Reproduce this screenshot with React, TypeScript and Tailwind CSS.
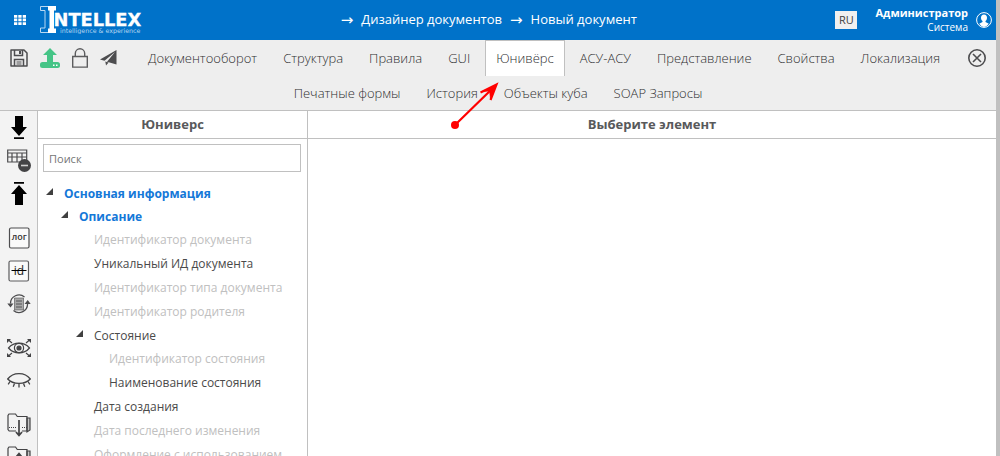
import React from 'react';
import clsx from 'clsx';

const primaryTabs = ['Документооборот', 'Структура', 'Правила', 'GUI', 'Юнивёрс', 'АСУ-АСУ', 'Представление', 'Свойства', 'Локализация'];
const secondaryTabs = ['Печатные формы', 'История', 'Объекты куба', 'SOAP Запросы'];

type TreeNode = {
  label: string;
  kind?: 'group' | 'muted';
  children?: TreeNode[];
};

const tree: TreeNode[] = [
  {
    label: 'Основная информация',
    kind: 'group',
    children: [
      {
        label: 'Описание',
        kind: 'group',
        children: [
          { label: 'Идентификатор документа', kind: 'muted' },
          { label: 'Уникальный ИД документа' },
          { label: 'Идентификатор типа документа', kind: 'muted' },
          { label: 'Идентификатор родителя', kind: 'muted' },
          {
            label: 'Состояние',
            children: [
              { label: 'Идентификатор состояния', kind: 'muted' },
              { label: 'Наименование состояния' },
            ],
          },
          { label: 'Дата создания' },
          { label: 'Дата последнего изменения', kind: 'muted' },
          { label: 'Оформление с использованием', kind: 'muted' },
        ],
      },
    ],
  },
];

function Logo() {
  return (
    <svg width="102" height="28" viewBox="0 0 102 28" role="img" aria-label="Intellex">
      <path d="M10 .5H.5V4.500H5v17.500H.5v4.500H10" fill="none" stroke="#b9d8f2" />
      <path d="M8 0h8v4.500h-2v18h2V27H8v-4.500h1.500v-18H8z" fill="#fff" />
      <text x="13.500" y="20" fill="#fff" stroke="#fff" strokeWidth=".3" fontFamily="DejaVu Sans, sans-serif" fontWeight="700" fontSize="17.800">NTELLEX</text>
      <text x="20" y="26.500" fill="#b5d5f0" fontFamily="DejaVu Sans, sans-serif" fontSize="6.300">intelligence &amp; experience</text>
    </svg>
  );
}

function SaveIcon() {
  return (
    <svg width="18" height="18" viewBox="0 0 18 18" fill="none" stroke="#4d4d4f" strokeWidth="1.500">
      <path d="M1 1h13l3 3v13H1z" strokeLinejoin="round" />
      <path d="M4.500 1v5.500h8V1M4.500 17v-6.500h9V17" />
      <path d="M10 2v3" strokeWidth="2" />
      <path d="M6.500 13h5M6.500 15h5" strokeWidth="1" />
    </svg>
  );
}

function UploadIcon() {
  return (
    <svg width="20" height="20" viewBox="0 0 20 20">
      <path d="M10 0l7 7h-4v6H7V7H3z" fill="#45c486" />
      <rect x="0" y="14" width="20" height="6" rx="2.500" fill="#45c486" />
      <path d="M7 12.500h6V15H7z" fill="#45c486" />
      <path d="M13 17.200h1.500M16 17.200h1.500" stroke="#fff" strokeWidth="1.400" />
    </svg>
  );
}

function LockIcon() {
  return (
    <svg width="16" height="20" viewBox="0 0 16 20" fill="none" stroke="#5c5c5e" strokeWidth="1.400">
      <path d="M.7 8.500h14.600v10.600H.7z" />
      <path d="M3.300 8.500V5.500a4.700 4.700 0 0 1 9.400 0v3" />
    </svg>
  );
}

function SendIcon() {
  return (
    <svg width="17" height="16" viewBox="0 0 17 16" fill="#4d4d4f">
      <path d="M16.500 0L0 9.500l4.500 1.300L15 2 7 11.800l9.500 2.700z" />
      <path d="M5.300 11.500l.7 4 2.600-3z" />
    </svg>
  );
}

function CloseIcon() {
  return (
    <svg width="20" height="20" viewBox="0 0 20 20" fill="none" stroke="#4d4d4f" strokeWidth="1.600">
      <circle cx="10" cy="10" r="8.200" />
      <path d="M6 6l8 8M14 6l-8 8" />
    </svg>
  );
}

function UserIcon() {
  return (
    <svg width="16" height="16" viewBox="0 0 16 16">
      <circle cx="8" cy="8" r="7.400" fill="none" stroke="#fff" strokeWidth="1" />
      <path d="M8 2.500c2 0 3 1.300 3 3.200 0 1.500-.6 2.600-1.500 3.300v1l3.300 1.800A7 7 0 0 1 8 15a7 7 0 0 1-4.800-3.200L6.500 10V9C5.600 8.300 5 7.200 5 5.700c0-1.900 1-3.200 3-3.200z" fill="#fff" />
    </svg>
  );
}

function ArrowBar({ up = false }: { up?: boolean }) {
  return (
    <svg width="16" height="23" viewBox="0 0 16 23" className={up ? 'rotate-180' : ''}>
      <path d="M4 0h8v11h4l-8 9-8-9h4zM3 21.200h10V23H3z" />
    </svg>
  );
}

function TableMinusIcon() {
  return (
    <svg width="24" height="24" viewBox="0 0 24 24" fill="none" stroke="#4d4d4f">
      <path d="M.7 1h19v12h-19zM.7 4h19M.7 8h19M5 4v9M10 4v9M15 4v9" strokeWidth="1.200" />
      <circle cx="17.500" cy="16.500" r="6.500" fill="#434345" stroke="none" />
      <path d="M14 16.500h7" stroke="#d0d0d0" strokeWidth="1.600" />
    </svg>
  );
}

function LogIcon() {
  return (
    <svg width="22" height="22" viewBox="0 0 22 22">
      <rect x="1.500" y="1" width="19.500" height="20" rx="1.500" fill="#fafafa" stroke="#4d4d4f" strokeWidth="1.200" />
      <text x="11.200" y="13" textAnchor="middle" fill="#333" fontFamily="Open Sans, sans-serif" fontWeight="600" fontSize="9">лог</text>
    </svg>
  );
}

function IdIcon() {
  return (
    <svg width="22" height="22" viewBox="0 0 22 22">
      <rect x="1" y="1" width="19.500" height="20" rx="1.500" fill="#fafafa" stroke="#5c5c5e" strokeWidth="1.200" />
      <text x="11" y="15" textAnchor="middle" fill="#222" fontFamily="Open Sans, sans-serif" fontSize="12">id</text>
      <path d="M3.500 10.500h15" stroke="#000" />
    </svg>
  );
}

function SyncIcon() {
  return (
    <svg width="24" height="20" viewBox="0 0 24 20" fill="none" stroke="#4d4d4f">
      <path d="M3.500 9.500A8.500 8.500 0 0 1 17.500 3M20.500 9.500A8.500 8.500 0 0 1 6.500 16.500" strokeWidth="1.300" />
      <path d="M.3 9.500h6.200l-3 4zM17.500 10h6.200l-3-4z" fill="#4d4d4f" stroke="none" />
      <path d="M7.500 4h9v12h-9z" fill="#a8a8a8" strokeWidth=".6" />
      <path d="M9 7h6M9 10h6M9 13h6" strokeWidth=".9" />
    </svg>
  );
}

function EyeIcon() {
  return (
    <svg width="24" height="20" viewBox="0 0 24 20" fill="none" stroke="#434345" strokeWidth="1.200">
      <path d="M1.500 10C7 3.500 17 3.500 22.500 10 17 16.500 7 16.500 1.500 10z" />
      <circle cx="12" cy="10" r="4.600" />
      <circle cx="12" cy="10" r="2" fill="#434345" />
      <path d="M1.500 2l3.500 3M22.500 2L19 5M1.500 18L5 15M22.500 18L19 15" />
      <path d="M0 1h4L0 5zM24 1h-4l4 4zM0 19h4l-4-4zM24 19h-4l4-4z" fill="#434345" stroke="none" />
    </svg>
  );
}

function EyeClosedIcon() {
  return (
    <svg width="24" height="17" viewBox="0 0 24 17" fill="none" stroke="#434345" strokeWidth="1.300">
      <path d="M.7 7C6-.3 18-.3 23.300 7 18 12.800 6 12.800.7 7z" />
      <path d="M3 9.500l-1.800 2.800M7.500 11.500l-1.300 3.300M12 12v3.500M16.500 11.500l1.300 3.300M21 9.500l1.800 2.800" />
    </svg>
  );
}

function FolderArrowIcon({ up = false }: { up?: boolean }) {
  return (
    <svg width="24" height="24" viewBox="0 0 24 24" fill="none" stroke="#434345" strokeWidth="1.200">
      <path d="M20 5h3v12l-3 2z" fill="#c5c5c5" />
      <path d="M9 18H2.200L1 16.500V2.500L2 1h6.500l1.800 2.500H20V18h-5" />
      <path d="M2 14.500h7M15 14.500h5" strokeDasharray="1 1" />
      {up ? (
        <path d="M12 22V8M9.500 10.500L12 7.500l2.500 3" strokeWidth="1.700" />
      ) : (
        <path d="M12 7v15M9 19l3 3.500 3-3.500" strokeWidth="1.700" />
      )}
    </svg>
  );
}

const toolGroups = [
  [
    { title: 'Вниз', icon: <ArrowBar /> },
    { title: 'Таблица', icon: <TableMinusIcon /> },
    { title: 'Вверх', icon: <ArrowBar up /> },
  ],
  [
    { title: 'Лог', icon: <LogIcon /> },
    { title: 'Без id', icon: <IdIcon /> },
    { title: 'Обновить', icon: <SyncIcon /> },
  ],
  [
    { title: 'Показать', icon: <EyeIcon /> },
    { title: 'Скрыть', icon: <EyeClosedIcon /> },
  ],
  [
    { title: 'Сохранить в папку', icon: <FolderArrowIcon /> },
    { title: 'Загрузить из папки', icon: <FolderArrowIcon up /> },
  ],
];

function Tab({ label, active = false }: { label: string; active?: boolean }) {
  return (
    <button
      type="button"
      className={clsx(
        'h-9 shrink-0 border border-b-0 px-[10px] font-light whitespace-nowrap text-[#2e2e30]',
        active ? 'border-[#c0c0c0] bg-white' : 'border-transparent',
      )}
    >
      {label}
    </button>
  );
}

function Branch({ nodes }: { nodes: TreeNode[] }) {
  return (
    <ul>
      {nodes.map((node) => (
        <li key={node.label}>
          <div className={clsx('flex items-center', node.children ? 'h-[23px]' : 'h-6')}>
            <span className="w-[18px] shrink-0">
              {node.children && (
                <svg width="7" height="7" viewBox="0 0 7 7" className="mb-1" fill="#404040">
                  <path d="M7 0v7H0z" />
                </svg>
              )}
            </span>
            <span
              className={clsx(
                'whitespace-nowrap',
                node.kind === 'group' && 'font-bold text-[#1478d8]',
                node.kind === 'muted' && 'text-[#c0c0c0]',
                !node.kind && 'text-[#4a4a4a]',
              )}
            >
              {node.label}
            </span>
          </div>
          {node.children && (
            <div className="pl-[15px]">
              <Branch nodes={node.children} />
            </div>
          )}
        </li>
      ))}
    </ul>
  );
}

export default function App() {
  return (
    <div className="relative flex h-screen flex-col overflow-hidden border-r-4 border-[#c0c0c0] bg-white font-['Open_Sans',sans-serif] text-[13px] text-[#58595b]">
      <header className="flex h-10 shrink-0 items-center bg-[#0072c9] pr-1 text-white">
        <button type="button" aria-label="Меню" className="ml-[14px]">
          <svg width="12" height="10" viewBox="0 0 12 10" fill="#fff">
            <path d="M0 0h3.300v2.700H0zM4.300 0h3.300v2.700H4.300zM8.700 0H12v2.700H8.700zM0 3.600h3.300v2.700H0zM4.300 3.600h3.300v2.700H4.300zM8.700 3.600H12v2.700H8.700zM0 7.300h3.300V10H0zM4.300 7.300h3.300V10H4.300zM8.700 7.300H12V10H8.700z" />
          </svg>
        </button>
        <a href="#" className="ml-[14px]">
          <Logo />
        </a>
        <nav className="flex flex-1 items-center justify-center gap-2">
          <span className="font-['DejaVu_Sans',sans-serif] text-[15px]">→</span>
          <a href="#">Дизайнер документов</a>
          <span className="font-['DejaVu_Sans',sans-serif] text-[15px]">→</span>
          <a href="#">Новый документ</a>
        </nav>
        <button type="button" className="h-[18px] w-[22px] bg-[#f0f0f0] text-[11px] leading-[18px] text-[#404040]">
          RU
        </button>
        <div className="ml-[18px] text-right leading-[14px]">
          <p className="text-[11px] font-bold">Администратор</p>
          <p className="text-[10px]">Система</p>
        </div>
        <button type="button" aria-label="Профиль" className="ml-2">
          <UserIcon />
        </button>
      </header>

      <div className="shrink-0 border-b border-[#c0c0c0] bg-[#eeeeee]">
        <div className="flex h-9 items-center">
          <div className="flex items-center gap-3 pl-[10px]">
            <button type="button" aria-label="Сохранить"><SaveIcon /></button>
            <button type="button" aria-label="Выгрузить"><UploadIcon /></button>
            <button type="button" aria-label="Заблокировать"><LockIcon /></button>
            <button type="button" aria-label="Отправить"><SendIcon /></button>
          </div>
          <nav className="flex flex-1 justify-center gap-1 pl-1">
            {primaryTabs.map((tab) => (
              <Tab key={tab} label={tab} active={tab === 'Юнивёрс'} />
            ))}
          </nav>
          <button type="button" aria-label="Закрыть" className="pr-[9px]"><CloseIcon /></button>
        </div>
        <nav className="flex h-[34px] items-center justify-center gap-1">
          {secondaryTabs.map((tab) => (
            <Tab key={tab} label={tab} />
          ))}
        </nav>
      </div>

      <div className="flex min-h-0 flex-1">
        <aside className="flex w-[38px] shrink-0 flex-col gap-[11px] border-r border-[#c0c0c0] bg-[#f3f3f3]">
          {toolGroups.map((group, index) => (
            <div key={index}>
              {group.map((tool) => (
                <button key={tool.title} type="button" aria-label={tool.title} className="flex h-[33px] w-full items-center justify-center">
                  {tool.icon}
                </button>
              ))}
            </div>
          ))}
        </aside>

        <section className="w-[270px] shrink-0 border-r border-[#c0c0c0]">
          <h2 className="h-7 border-b border-[#c0c0c0] text-center leading-[27px] font-bold">Юниверс</h2>
          <div className="pt-[5px] pr-[6px] pl-[5px]">
            <input
              type="text"
              aria-label="Поиск"
              placeholder="Поиск"
              className="h-7 w-full border border-[#c0c0c0] px-[5px] text-[11px] placeholder:text-[#757575]"
            />
          </div>
          <div className="pt-[10px] pl-2 text-[12px]">
            <Branch nodes={tree} />
          </div>
        </section>

        <main className="min-w-0 flex-1">
          <h2 className="h-7 border-b border-[#c0c0c0] text-center leading-[27px] font-bold">Выберите элемент</h2>
        </main>
      </div>

      {/* Pointer to the active tab */}
      <svg width="50" height="50" viewBox="0 0 50 50" className="pointer-events-none absolute top-[81px] left-[449px]" fill="none" stroke="#f00" strokeWidth="2.200">
        <path d="M6 44L46 5M31.500 11.500L47.500 3.500l-6 15.500" />
        <path d="M32 11l8.500-1 1 8.500 5-14z" fill="#f00" strokeWidth=".5" />
        <circle cx="6" cy="44" r="4" fill="#f00" stroke="none" />
      </svg>
    </div>
  );
}
